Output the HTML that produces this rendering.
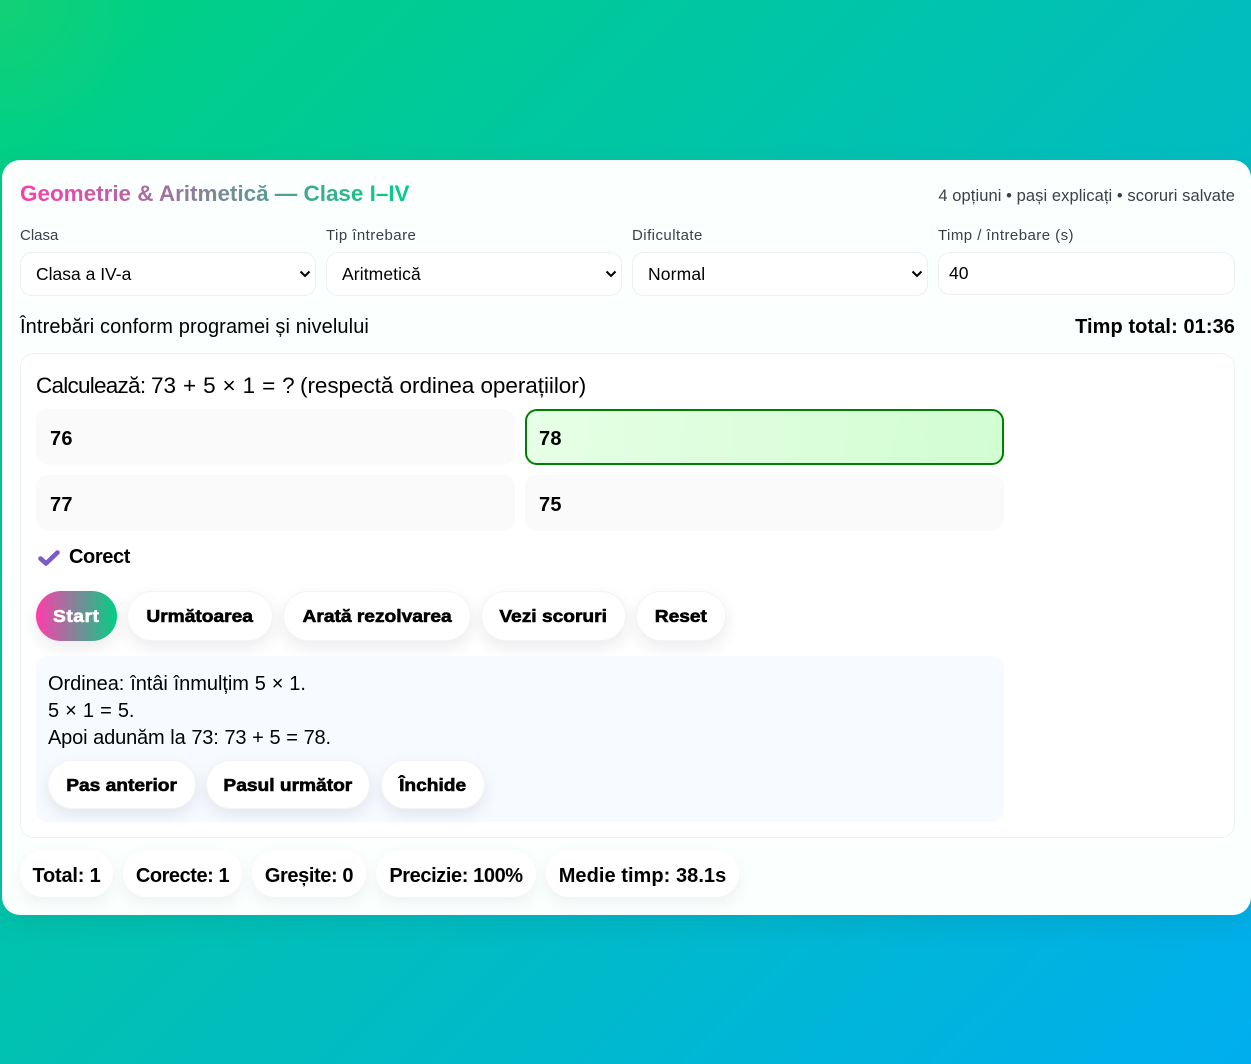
<!DOCTYPE html>
<html lang="ro"><head><meta charset="utf-8"><title>Geometrie &amp; Aritmetică</title>
<style>
*{box-sizing:border-box}
html,body{margin:0;padding:0;width:1251px;height:1064px;overflow:hidden}
body{position:relative;font-family:"Liberation Sans",sans-serif;color:#000;
background:radial-gradient(circle 150px at 0 0,rgba(60,205,100,.32),rgba(60,205,100,0)),linear-gradient(135deg,#00d27f 0%,#00aeef 100%)}
.a{position:absolute;white-space:nowrap}
#card{position:absolute;left:2px;top:160px;width:1249px;height:755px;border-radius:18px;background:#fbfffe;box-shadow:0 8px 30px rgba(0,0,0,.08)}
.lab{font-size:15px;color:#3a4048;top:227px;line-height:18px;letter-spacing:.45px}
.sel{top:252px;height:44px;width:296px;background:#fff;border:1px solid #eeeff1;border-radius:12px;font-size:17.5px;line-height:42px;padding-left:15px;letter-spacing:0}
.sel svg{position:absolute;right:3px;top:15px}
#q{position:absolute;left:20px;top:353px;width:1215px;height:485px;background:#fff;border:1px solid #eef0f2;border-radius:14px}
.opt{height:56px;width:479px;background:#fafafa;border-radius:12px;font-weight:bold;font-size:20px;line-height:60px;padding-left:14px;letter-spacing:.2px}
.btn{height:50px;border-radius:25px;background:#fff;box-shadow:0 6px 16px rgba(20,30,50,.09);border:1px solid #f3f4f5;font-weight:bold;font-size:17.5px;line-height:48px;text-align:center;-webkit-text-stroke:.6px #000}
.btn span{display:inline-block;transform:scaleX(1.095)}
.pill{top:850px;height:47px;border-radius:23px;background:#fff;box-shadow:0 6px 16px rgba(20,40,50,.06);font-weight:bold;font-size:20px;line-height:52px;text-align:center;letter-spacing:-.25px}
.ex{font-size:20px;left:48px;line-height:27px;letter-spacing:-.1px;word-spacing:.4px}
.qt{top:371px;font-size:22.500px;line-height:29px}
</style></head><body>
<div id="card"></div>
<div class="a" style="left:20px;top:180px;font-size:22.5px;line-height:28px;font-weight:bold;letter-spacing:-.03px;background:linear-gradient(90deg,#ff3cac,#00d084);-webkit-background-clip:text;background-clip:text;color:transparent">Geometrie &amp; Aritmetică — Clase I–IV</div>
<div class="a" style="right:16px;top:186px;font-size:16.5px;line-height:20px;color:#3a4048;letter-spacing:.08px">4 opțiuni • pași explicați • scoruri salvate</div>

<div class="a lab" style="left:20px;letter-spacing:0">Clasa</div>
<div class="a lab" style="left:326px">Tip întrebare</div>
<div class="a lab" style="left:632px">Dificultate</div>
<div class="a lab" style="left:938px">Timp / întrebare (s)</div>

<div class="a sel" style="left:20px">Clasa a IV-a<svg width="14" height="12" viewBox="0 0 14 12"><path d="M2.500 3.500L7 8l4.500-4.500" fill="none" stroke="#000" stroke-width="2"/></svg></div>
<div class="a sel" style="left:326px;letter-spacing:.1px">Aritmetică<svg width="14" height="12" viewBox="0 0 14 12"><path d="M2.500 3.500L7 8l4.500-4.500" fill="none" stroke="#000" stroke-width="2"/></svg></div>
<div class="a sel" style="left:632px;letter-spacing:.15px">Normal<svg width="14" height="12" viewBox="0 0 14 12"><path d="M2.500 3.500L7 8l4.500-4.500" fill="none" stroke="#000" stroke-width="2"/></svg></div>
<div class="a sel" style="left:938px;width:297px;height:43px;line-height:40px;padding-left:10px">40</div>

<div class="a" style="left:20px;top:315px;font-size:20px;line-height:25px;letter-spacing:.11px">Întrebări conform programei și nivelului</div>
<div class="a" style="right:16px;top:315px;font-size:20px;line-height:25px;font-weight:bold;letter-spacing:.08px">Timp total: 01:36</div>

<div id="q"></div>
<div class="a qt" style="left:36px;letter-spacing:-.75px">Calculează:</div>
<div class="a qt" style="left:151px;word-spacing:.7px">73 + 5 × 1 = ?</div>
<div class="a qt" style="left:300px;letter-spacing:-.05px">(respectă ordinea operațiilor)</div>

<div class="a opt" style="left:36px;top:409px">76</div>
<div class="a opt" style="left:525px;top:409px;background:linear-gradient(100deg,#e6ffe6,#d2fdd2);border:2px solid #008000;line-height:56px;padding-left:12px">78</div>
<div class="a opt" style="left:36px;top:475px">77</div>
<div class="a opt" style="left:525px;top:475px">75</div>

<svg class="a" style="left:37px;top:548px" width="24" height="20" viewBox="0 0 24 20"><path d="M3.500 10.500L9 15.500 20.500 4.500" fill="none" stroke="#7a5cc4" stroke-width="4.600" stroke-linecap="round" stroke-linejoin="round"/></svg>
<div class="a" style="left:69px;top:545px;font-size:20px;line-height:25px;font-weight:bold;letter-spacing:-.4px">Corect</div>

<div class="a btn" style="left:36px;top:591px;width:81px;border:0;line-height:50px;color:#fff;-webkit-text-stroke:.6px #fff;letter-spacing:.5px;background:linear-gradient(90deg,#ff3cac,#00d084)"><span>Start</span></div>
<div class="a btn" style="left:127px;top:591px;width:146px"><span>Următoarea</span></div>
<div class="a btn" style="left:283px;top:591px;width:188px"><span>Arată rezolvarea</span></div>
<div class="a btn" style="left:481px;top:591px;width:145px"><span>Vezi scoruri</span></div>
<div class="a btn" style="left:636px;top:591px;width:90px"><span>Reset</span></div>

<div class="a" style="left:36px;top:656px;width:968px;height:166px;background:#f7faff;border-radius:12px"></div>
<div class="a ex" style="top:671px;letter-spacing:-.05px">Ordinea: întâi înmulțim 5 × 1.</div>
<div class="a ex" style="top:698px;word-spacing:.7px">5 × 1 = 5.</div>
<div class="a ex" style="top:725px;letter-spacing:-.16px">Apoi adunăm la 73: 73 + 5 = 78.</div>
<div class="a btn" style="left:48px;top:760px;width:148px;height:49px"><span>Pas anterior</span></div>
<div class="a btn" style="left:206px;top:760px;width:164px;height:49px"><span>Pasul următor</span></div>
<div class="a btn" style="left:381px;top:760px;width:104px;height:49px"><span>Închide</span></div>

<div class="a pill" style="left:20px;width:93px;letter-spacing:-.2px">Total: 1</div>
<div class="a pill" style="left:123px;width:119px;letter-spacing:-.45px">Corecte: 1</div>
<div class="a pill" style="left:252px;width:114px;letter-spacing:-.4px">Greșite: 0</div>
<div class="a pill" style="left:376px;width:160px;letter-spacing:-.4px">Precizie: 100%</div>
<div class="a pill" style="left:546px;width:193px;letter-spacing:.05px">Medie timp: 38.1s</div>
</body></html>
